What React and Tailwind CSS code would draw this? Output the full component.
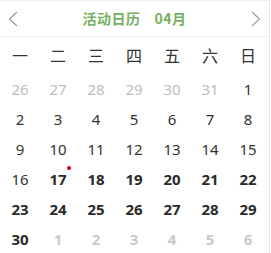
import React from 'react';

const WEEK = ['一', '二', '三', '四', '五', '六', '日'];

// 每格: [日期, 类型]  prev=上月 plain=本月普通 bold=本月加粗 next=下月
const DAYS = [
    [26, 'prev'], [27, 'prev'], [28, 'prev'], [29, 'prev'], [30, 'prev'], [31, 'prev'], [1, 'plain'],
    [2, 'plain'], [3, 'plain'], [4, 'plain'], [5, 'plain'], [6, 'plain'], [7, 'plain'], [8, 'plain'],
    [9, 'plain'], [10, 'plain'], [11, 'plain'], [12, 'plain'], [13, 'plain'], [14, 'plain'], [15, 'plain'],
    [16, 'plain'], [17, 'bold'], [18, 'bold'], [19, 'bold'], [20, 'bold'], [21, 'bold'], [22, 'bold'],
    [23, 'bold'], [24, 'bold'], [25, 'bold'], [26, 'bold'], [27, 'bold'], [28, 'bold'], [29, 'bold'],
    [30, 'bold'], [1, 'next'], [2, 'next'], [3, 'next'], [4, 'next'], [5, 'next'], [6, 'next'],
];

const STYLE = {
    prev:  'text-[#bdbdbd] font-normal',
    plain: 'text-[#333] font-normal',
    bold:  'text-[#2a2a2a] font-bold',
    next:  'text-[#c9c9c9] font-bold',
};

function Chevron({ dir }) {
    return (
        <svg width="10" height="16" viewBox="0 0 10 16" fill="none">
            <path
                d={dir === 'left' ? 'M9 1 L1.5 8 L9 15' : 'M1 1 L8.5 8 L1 15'}
                stroke="#9a9a9a"
                strokeWidth="1.2"
            />
        </svg>
    );
}

export default function App() {
    return (
        <div className="w-[270px] h-[253px] bg-white border-r border-[#e6e6e6] overflow-hidden font-['Noto_Sans','Noto_Sans_CJK_SC',sans-serif]">
            {/* 顶部月份切换 */}
            <div className="h-[37px] border-y border-[#eeeeee] flex items-center justify-between px-[8px]">
                <Chevron dir="left" />
                <div className="text-[14px] font-bold text-[#76b062] font-['Noto_Sans_CJK_SC',sans-serif] tracking-[0.5px]">
                    活动日历<span className="ml-[14px]">04月</span>
                </div>
                <Chevron dir="right" />
            </div>

            {/* 星期 */}
            <div className="grid grid-cols-7 w-[266px] ml-[1px] h-[37px] pb-[1px] items-center text-center text-[16px] text-[#333] font-['Noto_Sans_CJK_SC',sans-serif]">
                {WEEK.map(w => (
                    <span key={w}>{w}</span>
                ))}
            </div>

            {/* 日期 */}
            <div className="grid grid-cols-7 w-[266px] ml-[1px] auto-rows-[30px] text-center text-[15px]">
                {DAYS.map(([d, type], i) => (
                    <div key={i} className="flex items-center justify-center">
                        <span className={`relative ${STYLE[type]}`}>
                            {d}
                            {i === 22 && (
                                <span className="absolute -right-[4px] -top-[2px] w-[4px] h-[4px] rounded-full bg-[#d0021b]" />
                            )}
                        </span>
                    </div>
                ))}
            </div>
        </div>
    );
}
